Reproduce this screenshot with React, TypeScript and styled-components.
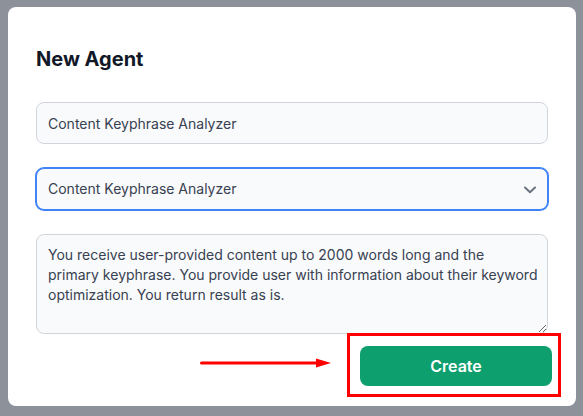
import React from "react";
import styled, { createGlobalStyle } from "styled-components";

const Global = createGlobalStyle`
  html, body { margin: 0; padding: 0; }
  body {
    background: #8c919a;
    font-family: Inter, "Noto Sans", sans-serif;
    width: 583px;
    height: 416px;
    overflow: hidden;
  }
  * { box-sizing: border-box; }
`;

const Page = styled.div`
  padding: 7px 7px 10px 8px;
`;

const Card = styled.div`
  position: relative;
  width: 568px;
  height: 399px;
  background: #ffffff;
  border-radius: 8px;
  padding: 38px 28px 20px 28px;
  display: flex;
  flex-direction: column;
`;

const Title = styled.h2`
  margin: 0 0 29px 0;
  font-size: 20px;
  line-height: 28px;
  font-weight: 700;
  color: #111827;
`;

const Form = styled.div`
  display: flex;
  flex-direction: column;
  gap: 24px;
`;

const fieldBase = `
  width: 100%;
  font-family: Inter, "Noto Sans", sans-serif;
  font-size: 14px;
  line-height: 20px;
  color: #374151;
  background: #f9fafb;
  border: 1px solid #d1d5db;
  border-radius: 8px;
  padding: 10px 11px;
  outline: none;
  margin: 0;
`;

const TextInput = styled.input`
  ${fieldBase}
  height: 42px;
`;

const SelectWrap = styled.div`
  position: relative;
`;

const Select = styled.select<{ $focused?: boolean }>`
  ${fieldBase}
  height: 42px;
  appearance: none;
  -webkit-appearance: none;
  border-color: ${(p) => (p.$focused ? "#3f83f8" : "#d1d5db")};
  box-shadow: ${(p) => (p.$focused ? "0 0 0 1px #3f83f8" : "none")};
`;

const Chevron = styled.svg`
  position: absolute;
  right: 12px;
  top: 18px;
  pointer-events: none;
`;

const TextArea = styled.textarea`
  ${fieldBase}
  height: 100px;
  padding-right: 9px;
  resize: vertical;
  display: block;
`;

const Footer = styled.div`
  display: flex;
  justify-content: flex-end;
  margin-top: 12px;
  margin-right: -4px;
`;

const ButtonHolder = styled.div`
  position: relative;
`;

const CreateButton = styled.button`
  width: 192px;
  height: 40px;
  border: none;
  border-radius: 8px;
  background: #0e9f6e;
  color: #ffffff;
  font-family: Inter, "Noto Sans", sans-serif;
  font-size: 16px;
  font-weight: 600;
  cursor: pointer;
`;

const Highlight = styled.div`
  position: absolute;
  top: -13px;
  left: -13px;
  right: -9px;
  bottom: -11px;
  border: 3px solid #ff0000;
  pointer-events: none;
`;

const Arrow = styled.svg`
  position: absolute;
  left: -160px;
  top: 11px;
  pointer-events: none;
`;

export default function App() {
  return (
    <>
      <Global />
      <Page>
        <Card>
          <Title>New Agent</Title>
          <Form>
            <TextInput defaultValue="Content Keyphrase Analyzer" />
            <SelectWrap>
              <Select $focused defaultValue="cka">
                <option value="cka">Content Keyphrase Analyzer</option>
              </Select>
              <Chevron width="12" height="8" viewBox="0 0 12 8" fill="none">
                <path
                  d="M1 1.5L6 6.2L11 1.5"
                  stroke="#6b7280"
                  strokeWidth="2"
                  strokeLinecap="round"
                  strokeLinejoin="round"
                />
              </Chevron>
            </SelectWrap>
            <TextArea defaultValue="You receive user-provided content up to 2000 words long and the primary keyphrase. You provide user with information about their keyword optimization. You return result as is." />
          </Form>
          <Footer>
            <ButtonHolder>
              <Arrow width="132" height="12" viewBox="0 0 132 12">
                <line x1="1.5" y1="6" x2="118" y2="6" stroke="#ff0000" strokeWidth="3" strokeLinecap="round" />
                <polygon points="116,1.5 131,6 116,10.5" fill="#ff0000" />
              </Arrow>
              <CreateButton>Create</CreateButton>
              <Highlight />
            </ButtonHolder>
          </Footer>
        </Card>
      </Page>
    </>
  );
}
